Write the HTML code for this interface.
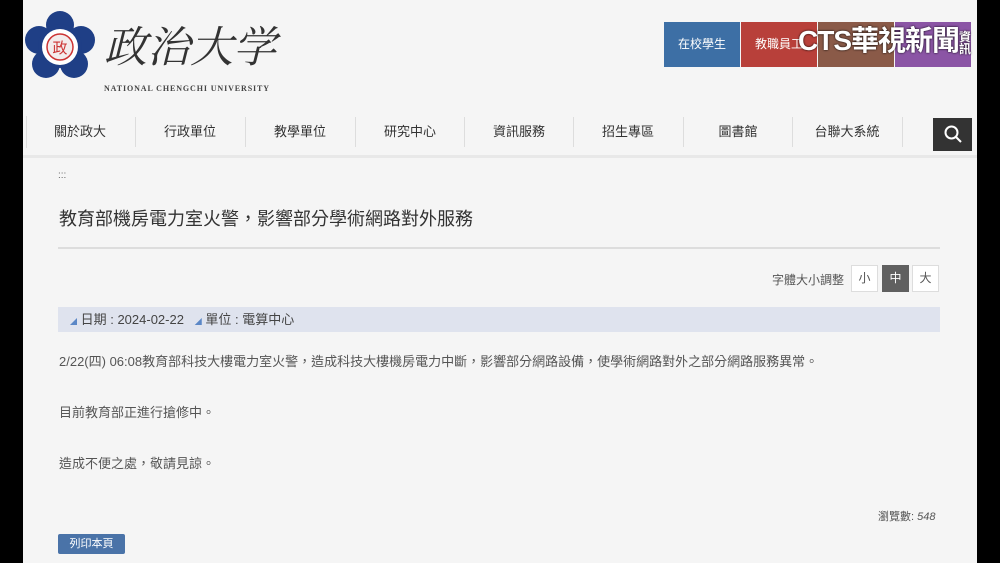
<!DOCTYPE html>
<html><head><meta charset="utf-8"><style>
*{margin:0;padding:0;box-sizing:border-box}
body{width:1000px;height:563px;background:#000;font-family:"Liberation Sans","Noto Sans CJK TC",sans-serif;color:#444;position:relative;overflow:hidden}
.page{position:absolute;left:23px;top:0;width:954px;height:563px;background:#f5f5f5}
.a{position:absolute}
.box{position:absolute;top:22px;height:45px;width:76px;color:#fff;font-size:12px;text-align:center;line-height:45px}
.nav{position:absolute;top:112px;font-size:13px;color:#333;width:110px;text-align:center;line-height:40px}
.sep{position:absolute;top:117px;width:1px;height:30px;background:#ddd}
.fs{position:absolute;top:265px;width:27px;height:27px;border:1px solid #ddd;background:#fff;font-size:12px;text-align:center;line-height:25px;color:#555}
p{position:absolute;left:59px;font-size:13px;color:#555}
</style></head><body>
<div class="page"></div>
<svg class="a" style="left:24px;top:10px" width="72" height="70" viewBox="0 0 72 70">
<g fill="#1f3f86"><circle cx="36" cy="15" r="14"/><circle cx="15" cy="30" r="14"/><circle cx="57" cy="30" r="14"/><circle cx="22" cy="54" r="14"/><circle cx="50" cy="54" r="14"/><circle cx="36" cy="36" r="22"/></g>
<circle cx="36" cy="37" r="18" fill="#fff"/><circle cx="36" cy="37" r="13" fill="#f3ecec" stroke="#c33" stroke-width="1.5"/>
<text x="36" y="43" font-size="15" fill="#c33" text-anchor="middle" font-family="Noto Sans CJK TC">政</text></svg>
<div class="a" style="left:104px;top:14px;font-size:43px;font-family:'Noto Serif CJK SC',serif;color:#333;line-height:62px;font-style:italic">政治大学</div>
<div class="a" style="left:104px;top:84px;font-size:8px;font-weight:bold;font-family:'Liberation Serif',serif;color:#444;letter-spacing:.9px">NATIONAL CHENGCHI UNIVERSITY</div>
<div class="box" style="left:664px;background:#3d6fa5">在校學生</div>
<div class="box" style="left:741px;background:#b8403a">教職員工</div>
<div class="box" style="left:818px;background:#8a5a48"></div>
<div class="box" style="left:895px;background:#8b55a5"></div>
<div class="a" style="left:798px;top:22px;font-size:28px;font-weight:bold;color:#fff;line-height:38px;letter-spacing:-1px;text-shadow:0 0 2px #000">CTS華視新聞<span style="font-size:12px;display:inline-block;width:14px;line-height:12px;vertical-align:middle">資訊</span></div>
<div class="nav" style="left:25px">關於政大</div><div class="sep" style="left:135px"></div>
<div class="nav" style="left:135px">行政單位</div><div class="sep" style="left:245px"></div>
<div class="nav" style="left:245px">教學單位</div><div class="sep" style="left:355px"></div>
<div class="nav" style="left:355px">研究中心</div><div class="sep" style="left:464px"></div>
<div class="nav" style="left:464px">資訊服務</div><div class="sep" style="left:573px"></div>
<div class="nav" style="left:573px">招生專區</div><div class="sep" style="left:683px"></div>
<div class="nav" style="left:683px">圖書館</div><div class="sep" style="left:792px"></div>
<div class="nav" style="left:792px">台聯大系統</div><div class="sep" style="left:902px"></div>
<div class="a" style="left:26px;top:116px;width:1px;height:32px;background:#ddd"></div>
<div class="a" style="left:933px;top:118px;width:39px;height:33px;background:#333"></div>
<svg class="a" style="left:943px;top:124px" width="20" height="20"><circle cx="8.5" cy="8.5" r="6" fill="none" stroke="#fff" stroke-width="2"/><line x1="13" y1="13" x2="18" y2="18" stroke="#fff" stroke-width="2"/></svg>
<div class="a" style="left:23px;top:155px;width:954px;height:3px;background:#e8e8e8"></div>
<div class="a" style="left:58px;top:170px;font-size:10px;color:#666">:::</div>
<div class="a" style="left:59px;top:205px;font-size:18px;color:#333">教育部機房電力室火警，影響部分學術網路對外服務</div>
<div class="a" style="left:58px;top:247px;width:882px;height:2px;background:#ddd"></div>
<div class="a" style="left:772px;top:271px;font-size:12px;color:#555">字體大小調整</div>
<div class="fs" style="left:851px">小</div>
<div class="fs" style="left:882px;background:#606060;color:#fff;border-color:#606060">中</div>
<div class="fs" style="left:912px">大</div>
<div class="a" style="left:58px;top:307px;width:882px;height:25px;background:#dfe3ee;font-size:13px;color:#444;line-height:25px;padding-left:12px"><span style="color:#5b87c6;font-size:7px">◢</span> 日期 : 2024-02-22 &nbsp;&nbsp;<span style="color:#5b87c6;font-size:7px">◢</span> 單位 : 電算中心</div>
<p style="top:351px">2/22(四) 06:08教育部科技大樓電力室火警，造成科技大樓機房電力中斷，影響部分網路設備，使學術網路對外之部分網路服務異常。</p>
<p style="top:402px">目前教育部正進行搶修中。</p>
<p style="top:453px">造成不便之處，敬請見諒。</p>
<div class="a" style="left:878px;top:508px;font-size:11px;color:#555">瀏覽數: <i>548</i></div>
<div class="a" style="left:58px;top:534px;width:67px;height:20px;background:#4a73a8;color:#fff;font-size:11px;text-align:center;line-height:20px;border-radius:2px">列印本頁</div>
</body></html>
